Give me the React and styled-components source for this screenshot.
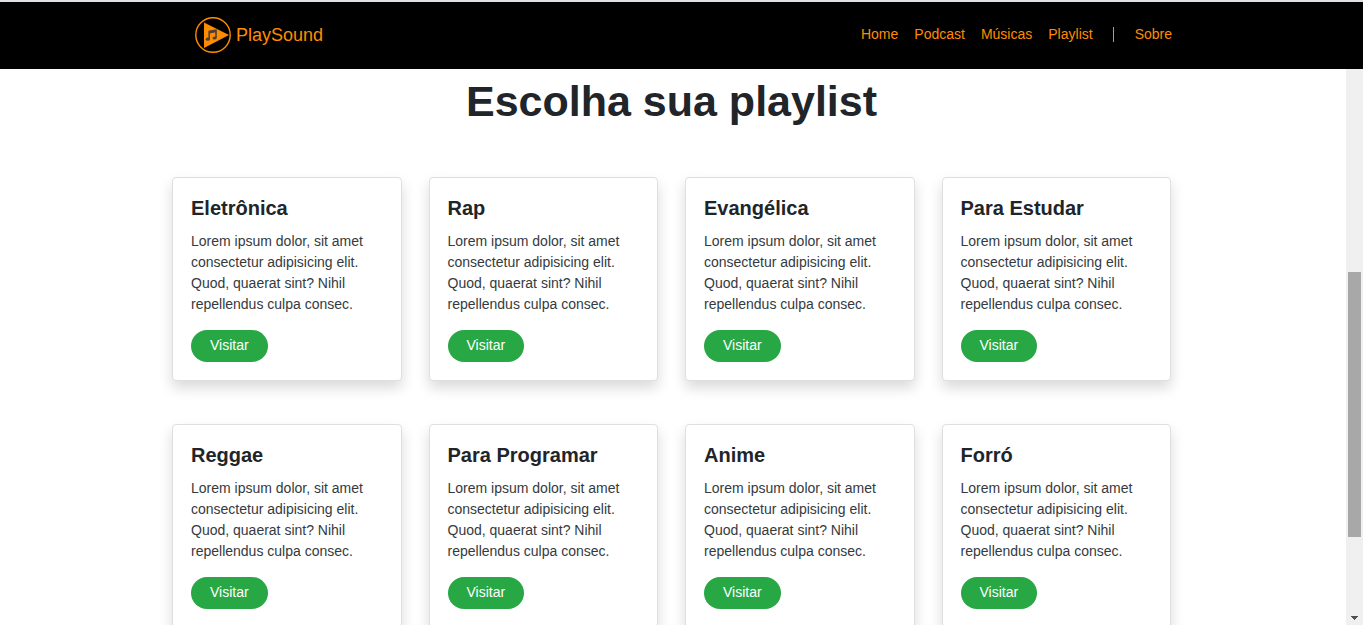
import React from "react";
import styled, { createGlobalStyle } from "styled-components";

const GlobalStyle = createGlobalStyle`
  * { box-sizing: border-box; }
  body {
    margin: 0;
    background: #fff;
    color: #212529;
    font: 14px/21px "Liberation Sans", Arial, sans-serif;
  }
`;

const Page = styled.div`
  display: flex;
  flex-direction: column;
  height: 100vh;
  overflow: hidden;
`;

const Header = styled.header`
  flex: none;
  background: #000;
  border-top: 2px solid #dee1e6;
`;

const HeaderInner = styled.div`
  display: flex;
  align-items: center;
  justify-content: space-between;
  max-width: 981px;
  height: 67px;
  margin: 0 auto;
  padding: 0 0 2px 4px;
`;

const Brand = styled.a`
  display: flex;
  align-items: center;
  gap: 5px;
  color: #ff8c00;
  font-size: 18px;
  line-height: 24px;
  text-decoration: none;
`;

const Logo = styled.svg`
  display: block;
  width: 36px;
  height: 36px;
`;

const Nav = styled.nav`
  display: flex;
  align-items: center;
  gap: 16px;
`;

const NavLink = styled.a`
  color: #ff8c00;
  text-decoration: none;
`;

const Divider = styled.span`
  width: 1px;
  height: 15px;
  margin: 0 5px 0 4px;
  background: #ff8c00;
`;

const Body = styled.div`
  display: flex;
  flex: 1;
  min-height: 0;
`;

const Main = styled.main`
  flex: 1;
  overflow: hidden;
  padding: 5px 3px 0 0;
`;

const Title = styled.h1`
  margin: 0 0 49px;
  font-size: 43px;
  line-height: 54px;
  font-weight: 700;
  text-align: center;
`;

const Grid = styled.div`
  display: grid;
  grid-template-columns: repeat(4, 1fr);
  gap: 43px 27px;
  max-width: 999px;
  margin: 0 auto;
`;

const Card = styled.article`
  padding: 18px;
  background: #fff;
  border: 1px solid #dfdfdf;
  border-radius: 4px;
  box-shadow: 0 7px 14px rgba(0, 0, 0, 0.15);
`;

const CardTitle = styled.h2`
  margin: 0 0 11px;
  font-size: 20px;
  line-height: 24px;
  font-weight: 700;
`;

const CardText = styled.p`
  margin: 0 0 15px;
  color: #343a40;
`;

const VisitButton = styled.button`
  display: block;
  height: 32px;
  padding: 0 19px 2px;
  border: 0;
  border-radius: 16px;
  background: #28a745;
  color: #fff;
  font: 14px/21px "Liberation Sans", Arial, sans-serif;
  cursor: pointer;
`;

const Scrollbar = styled.div`
  display: flex;
  flex-direction: column;
  flex: none;
  width: 17px;
  padding: 0 2px;
  background: #f0f0f0;
`;

const Track = styled.div`
  flex: ${(p) => p.$share} 1 0;
  display: flex;
  align-items: flex-end;
  justify-content: center;
`;

const Thumb = styled.div`
  flex: 265 1 0;
  background: #a8a8a8;
`;

const Arrow = styled.svg`
  display: block;
  width: 7px;
  height: 4px;
  margin-bottom: 5px;
`;

const links = ["Home", "Podcast", "Músicas", "Playlist"];

const playlists = [
  "Eletrônica",
  "Rap",
  "Evangélica",
  "Para Estudar",
  "Reggae",
  "Para Programar",
  "Anime",
  "Forró",
];

function PlaylistCard({ name }) {
  return (
    <Card>
      <CardTitle>{name}</CardTitle>
      <CardText>
        Lorem ipsum dolor, sit amet consectetur adipisicing elit. Quod, quaerat
        sint? Nihil repellendus culpa consec.
      </CardText>
      <VisitButton type="button">Visitar</VisitButton>
    </Card>
  );
}

export default function App() {
  return (
    <Page>
      <GlobalStyle />
      <Header>
        <HeaderInner>
          <Brand href="#">
            <Logo viewBox="0 0 36 36" aria-hidden="true">
              <circle cx="18" cy="18" r="17.2" fill="none" stroke="#ff8c00" strokeWidth="1.4" />
              <path d="M9 5.5 34 18 9 31Z" fill="#ff8c00" />
              <path d="M14.2 22V14.5L21 13.2V20.8" fill="none" stroke="#4a4038" strokeWidth="1.6" />
              <path d="M14.2 15.4 21 14.1" stroke="#4a4038" strokeWidth="2.4" />
              <ellipse cx="12.8" cy="22.2" rx="2.1" ry="1.6" fill="#4a4038" />
              <ellipse cx="19.6" cy="21" rx="2.1" ry="1.6" fill="#4a4038" />
            </Logo>
            PlaySound
          </Brand>
          <Nav>
            {links.map((label) => (
              <NavLink href="#" key={label}>
                {label}
              </NavLink>
            ))}
            <Divider />
            <NavLink href="#">Sobre</NavLink>
          </Nav>
        </HeaderInner>
      </Header>
      <Body>
        <Main>
          <Title>Escolha sua playlist</Title>
          <Grid>
            {playlists.map((name) => (
              <PlaylistCard name={name} key={name} />
            ))}
          </Grid>
        </Main>
        <Scrollbar aria-hidden="true">
          <Track $share={203} />
          <Thumb />
          <Track $share={88}>
            <Arrow viewBox="0 0 7 4" shapeRendering="crispEdges">
              <path d="M0 0H7V1H6V2H5V3H4V4H3V3H2V2H1V1H0Z" fill="#505050" />
            </Arrow>
          </Track>
        </Scrollbar>
      </Body>
    </Page>
  );
}
